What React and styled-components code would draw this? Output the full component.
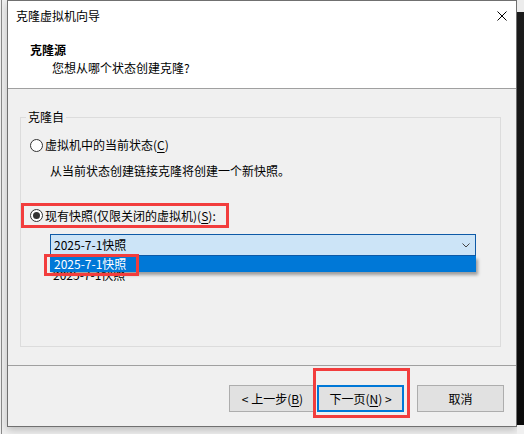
import React from "react";
import styled, { createGlobalStyle } from "styled-components";

const GlobalStyle = createGlobalStyle`
  body {
    margin: 0;
    background: #f0f0f0;
    font-family: "Noto Sans CJK SC", "Noto Sans", sans-serif;
    font-size: 12px;
    color: #000;
  }
`;

const Screen = styled.div`
  width: 524px;
  height: 434px;
  display: flex;
  align-items: flex-start;
  background: #f0f0f0;
  overflow: hidden;
`;

const LeftEdge = styled.div`
  width: 7px;
  height: 100%;
  flex: none;
  background: linear-gradient(to right, #f0f0f0 1px, #8a8a8a 1px, #8a8a8a 2px, #f0f0f0 2px);
`;

const RightEdge = styled.div`
  flex: 1;
  height: 100%;
  background: linear-gradient(to bottom, #ececec 0, #ececec 12px, #1c1c1c 12px, #0a0a0a 425px, #f0f0f0 425px);
`;

const Window = styled.div`
  width: 510px;
  height: 427px;
  flex: none;
  box-sizing: border-box;
  border: 1px solid #707070;
  background: #f0f0f0;
  display: flex;
  flex-direction: column;
  box-shadow: 0 3px 8px rgba(0, 0, 0, 0.22);
`;

const TitleBar = styled.div`
  height: 30px;
  flex: none;
  background: #fff;
  display: flex;
  align-items: center;
  justify-content: space-between;
  padding: 0 9px 0 8px;
  line-height: 16px;
`;

const Header = styled.div`
  background: #fff;
  padding: 11px 0 12px 22px;
  display: flex;
  flex-direction: column;
  gap: 2px;
  line-height: 16px;
  border-bottom: 1px solid #a0a0a0;
`;

const HeaderTitle = styled.div`
  font-weight: 700;
`;

const HeaderSub = styled.div`
  margin-left: 22px;
`;

const Body = styled.div`
  flex: 1;
  display: flex;
  flex-direction: column;
  padding: 20px 15px 18px 12px;
`;

const GroupBox = styled.fieldset`
  flex: 1;
  margin: 0;
  padding: 0;
  border: 1px solid #dcdcdc;
  display: flex;
  flex-direction: column;
  align-items: flex-start;
  min-width: 0;
`;

const Legend = styled.legend`
  margin-left: 5px;
  padding: 0 2px;
  line-height: 16px;
`;

const RadioRow = styled.label`
  display: flex;
  align-items: center;
  gap: 2px;
  height: 16px;
  line-height: 16px;
  margin: ${(p) => p.$margin || "0"};
  white-space: nowrap;
`;

const Radio = styled.span`
  width: 13px;
  height: 13px;
  flex: none;
  box-sizing: border-box;
  border: 1px solid #333;
  border-radius: 50%;
  background: #fff;
  display: inline-flex;
  align-items: center;
  justify-content: center;

  &::after {
    content: "";
    width: 7px;
    height: 7px;
    border-radius: 50%;
    background: #333;
    display: ${(p) => (p.$checked ? "block" : "none")};
  }
`;

const Key = styled.span`
  text-decoration: underline;
  text-underline-offset: 2px;
`;

const Note = styled.div`
  line-height: 16px;
  margin: ${(p) => p.$margin};
  white-space: nowrap;
`;

const Highlight = styled.div`
  width: 208px;
  height: 25px;
  box-sizing: border-box;
  border: 3px solid #f23d3d;
  margin-top: 24px;
  padding-left: 6px;
  display: flex;
  align-items: center;
`;

const ComboWrap = styled.div`
  position: relative;
  margin: 6px 0 0 29px;
  width: 426px;
`;

const Combo = styled.div`
  height: 22px;
  box-sizing: border-box;
  border: 1px solid #0e5aa7;
  background: #cce4f7;
  display: flex;
  align-items: center;
  justify-content: space-between;
  padding: 0 5px 0 3px;
  line-height: 16px;
`;

const DropList = styled.div`
  position: absolute;
  top: 100%;
  left: 0;
  right: 0;
  height: 16px;
  line-height: 16px;
  padding-left: 4px;
  background: #0078d7;
  color: #fff;
  box-shadow: 2px 3px 3px rgba(0, 0, 0, 0.35);
  z-index: 2;
`;

const ItemMark = styled.div`
  position: absolute;
  left: -6px;
  top: 20px;
  width: 95px;
  height: 22px;
  box-sizing: border-box;
  border: 3px solid #f23d3d;
  z-index: 3;
`;

const Footer = styled.div`
  height: 61px;
  flex: none;
  box-sizing: border-box;
  border-top: 1px solid #a0a0a0;
  display: flex;
  justify-content: flex-end;
  align-items: flex-start;
  padding: 19px 12px 0 0;
`;

const ButtonSlot = styled.div`
  position: relative;
  margin-right: ${(p) => p.$gap || 0}px;

  &::after {
    content: "";
    display: ${(p) => (p.$marked ? "block" : "none")};
    position: absolute;
    left: -4px;
    top: -17px;
    width: 97px;
    height: 50px;
    box-sizing: border-box;
    border: 3px solid #f23d3d;
  }
`;

const Button = styled.button`
  width: 87px;
  height: 27px;
  box-sizing: border-box;
  border: ${(p) => (p.$primary ? "2px solid #0078d7" : "1px solid #adadad")};
  background: #e1e1e1;
  font-family: inherit;
  font-size: 12px;
  line-height: 16px;
  color: #000;
  padding: 0;
  display: flex;
  align-items: center;
  justify-content: center;
  white-space: pre;
`;

const Chevron = () => (
  <svg width="8" height="5" viewBox="0 0 8 5">
    <polyline points="0.5,0.5 4,4 7.5,0.5" fill="none" stroke="#444" strokeWidth="1" />
  </svg>
);

const CloseIcon = () => (
  <svg width="10" height="10" viewBox="0 0 10 10">
    <path d="M0.5 0.5 L9.5 9.5 M9.5 0.5 L0.5 9.5" stroke="#000" strokeWidth="1" />
  </svg>
);

export default function App() {
  const snapshot = "2025-7-1快照";

  return (
    <>
      <GlobalStyle />
      <Screen>
        <LeftEdge />
        <Window>
          <TitleBar>
            <span>克隆虚拟机向导</span>
            <CloseIcon />
          </TitleBar>
          <Header>
            <HeaderTitle>克隆源</HeaderTitle>
            <HeaderSub>您想从哪个状态创建克隆?</HeaderSub>
          </Header>
          <Body>
            <GroupBox>
              <Legend>克隆自</Legend>
              <RadioRow $margin="12px 0 0 9px">
                <Radio />
                <span>
                  虚拟机中的当前状态(<Key>C</Key>)
                </span>
              </RadioRow>
              <Note $margin="10px 0 0 29px">从当前状态创建链接克隆将创建一个新快照。</Note>
              <Highlight>
                <RadioRow>
                  <Radio $checked />
                  <span>
                    现有快照(仅限关闭的虚拟机)(<Key>S</Key>):
                  </span>
                </RadioRow>
              </Highlight>
              <ComboWrap>
                <Combo>
                  <span>{snapshot}</span>
                  <Chevron />
                </Combo>
                <DropList>{snapshot}</DropList>
                <ItemMark />
              </ComboWrap>
              <Note $margin="11px 0 0 32px">{snapshot}</Note>
            </GroupBox>
          </Body>
          <Footer>
            <ButtonSlot $gap={1}>
              <Button>
                {"< 上一步("}
                <Key>B</Key>
                {")"}
              </Button>
            </ButtonSlot>
            <ButtonSlot $gap={13} $marked>
              <Button $primary>
                {"下一页("}
                <Key>N</Key>
                {") >"}
              </Button>
            </ButtonSlot>
            <ButtonSlot>
              <Button>取消</Button>
            </ButtonSlot>
          </Footer>
        </Window>
        <RightEdge />
      </Screen>
    </>
  );
}
